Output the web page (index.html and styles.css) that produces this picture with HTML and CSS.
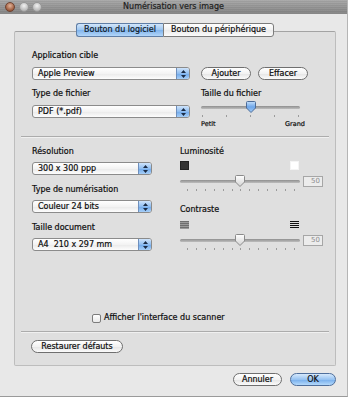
FILE: index.html
```html
<!DOCTYPE html>
<html lang="fr">
<head>
<meta charset="utf-8">
<title>Numérisation vers image</title>
<link rel="stylesheet" href="styles.css">
</head>
<body>
<div class="window">
  <div class="titlebar">
    <div class="lights"><span class="light close"></span><span class="light"></span><span class="light"></span></div>
    <div class="title">Numérisation vers image</div>
    <div></div>
  </div>
  <div class="content">
    <div class="box">
      <div class="tabs">
        <span class="tab tab-left active">Bouton du logiciel</span><span class="tab tab-right">Bouton du périphérique</span>
      </div>

      <div class="sec-top">
        <div class="lbl l-app">Application cible</div>
        <div class="row-app">
          <div class="popup w158"><span class="ptext">Apple Preview</span><span class="cap"><svg width="5" height="8" viewBox="0 0 5 8"><path d="M2.5 0 L5 3 H0 Z M0 5 H5 L2.5 8 Z" fill="#1b2c45"/></svg></span></div>
          <div class="btn w50">Ajouter</div>
          <div class="btn w50">Effacer</div>
        </div>
        <div class="row-type">
          <div class="col-type">
            <div class="lbl">Type de fichier</div>
            <div class="popup w158 mt6"><span class="ptext">PDF (*.pdf)</span><span class="cap"><svg width="5" height="8" viewBox="0 0 5 8"><path d="M2.5 0 L5 3 H0 Z M0 5 H5 L2.5 8 Z" fill="#1b2c45"/></svg></span></div>
          </div>
          <div class="col-size">
            <div class="lbl">Taille du fichier</div>
            <div class="slider s-top">
              <span class="track"></span>
              <svg class="thumb" style="left:50%" width="11" height="12" viewBox="0 0 11 12"><defs><linearGradient id="gb" x1="0" y1="0" x2="0" y2="1"><stop offset="0" stop-color="#c4dffb"/><stop offset="0.5" stop-color="#6fa7ea"/><stop offset="1" stop-color="#a2cbf6"/></linearGradient></defs><path d="M1 1.5 Q1 0.5 2 0.5 H9 Q10 0.5 10 1.5 V7 L5.5 11.5 L1 7 Z" fill="url(#gb)" stroke="#4d6c98"/></svg>
            </div>
            <div class="ticks t5"><i></i><i></i><i></i><i></i><i></i></div>
            <div class="minmax"><span>Petit</span><span>Grand</span></div>
          </div>
        </div>
      </div>

      <div class="sep"></div>

      <div class="sec-mid">
        <div class="col-left">
          <div class="lbl">Résolution</div>
          <div class="popup w120 mt5"><span class="ptext">300 x 300 ppp</span><span class="cap"><svg width="5" height="8" viewBox="0 0 5 8"><path d="M2.5 0 L5 3 H0 Z M0 5 H5 L2.5 8 Z" fill="#1b2c45"/></svg></span></div>
          <div class="lbl mt10">Type de numérisation</div>
          <div class="popup w120 mt5"><span class="ptext">Couleur 24 bits</span><span class="cap"><svg width="5" height="8" viewBox="0 0 5 8"><path d="M2.5 0 L5 3 H0 Z M0 5 H5 L2.5 8 Z" fill="#1b2c45"/></svg></span></div>
          <div class="lbl mt10">Taille document</div>
          <div class="popup w120 mt5"><span class="ptext">A4&nbsp; 210 x 297 mm</span><span class="cap"><svg width="5" height="8" viewBox="0 0 5 8"><path d="M2.5 0 L5 3 H0 Z M0 5 H5 L2.5 8 Z" fill="#1b2c45"/></svg></span></div>
        </div>
        <div class="col-right">
          <div class="lbl">Luminosité</div>
          <div class="icons mt4"><span class="sq-dark"></span><span class="sq-light"></span></div>
          <div class="slider-row mt5">
            <div class="slider s-bot">
              <span class="track"></span>
              <svg class="thumb" style="left:50%" width="11" height="12" viewBox="0 0 11 12"><defs><linearGradient id="gw" x1="0" y1="0" x2="0" y2="1"><stop offset="0" stop-color="#ffffff"/><stop offset="1" stop-color="#d2d2d2"/></linearGradient></defs><path d="M1 1.5 Q1 0.5 2 0.5 H9 Q10 0.5 10 1.5 V7 L5.5 11.5 L1 7 Z" fill="url(#gw)" stroke="#8a8a8a"/></svg>
            </div>
            <div class="field">50</div>
          </div>
          <div class="ticks t13"><i></i><i></i><i></i><i></i><i></i><i></i><i></i><i></i><i></i><i></i><i></i><i></i><i></i></div>
          <div class="lbl mt14">Contraste</div>
          <div class="icons mt6"><span class="ct-low"></span><span class="ct-high"></span></div>
          <div class="slider-row mt4">
            <div class="slider s-bot">
              <span class="track"></span>
              <svg class="thumb" style="left:50%" width="11" height="12" viewBox="0 0 11 12"><defs><linearGradient id="gw2" x1="0" y1="0" x2="0" y2="1"><stop offset="0" stop-color="#ffffff"/><stop offset="1" stop-color="#d2d2d2"/></linearGradient></defs><path d="M1 1.5 Q1 0.5 2 0.5 H9 Q10 0.5 10 1.5 V7 L5.5 11.5 L1 7 Z" fill="url(#gw2)" stroke="#8a8a8a"/></svg>
            </div>
            <div class="field">50</div>
          </div>
          <div class="ticks t13"><i></i><i></i><i></i><i></i><i></i><i></i><i></i><i></i><i></i><i></i><i></i><i></i><i></i></div>
        </div>
      </div>

      <div class="check-row"><span class="checkbox"></span><span>Afficher l'interface du scanner</span></div>

      <div class="sep sep2"></div>

      <div class="restore-row"><div class="btn w92">Restaurer défauts</div></div>
    </div>

    <div class="footer">
      <div class="btn w49">Annuler</div>
      <div class="btn btn-ok w46">OK</div>
    </div>
  </div>
</div>
</body>
</html>
```

FILE: styles.css
```css
* { box-sizing: border-box; }
html, body { margin: 0; padding: 0; }
body {
  background: #ffffff;
  font-family: "DejaVu Sans", sans-serif;
  font-size: 8px;
  color: #0d0d0d;
  -webkit-text-stroke: 0.2px currentColor;
  width: 350px;
  height: 400px;
  overflow: hidden;
}
.window {
  width: 348px;
  height: 397px;
  background: #e8e8e8;
  border-right: 1px solid #b5b5b5;
  border-bottom: 1px solid #9a9a9a;
}
.titlebar {
  height: 14px;
  display: grid;
  grid-template-columns: 1fr auto 1fr;
  align-items: center;
  background: repeating-linear-gradient(#c9c9c9 0 1px, #bdbdbd 1px 2px), linear-gradient(#d9d9d9, #adadad);
  background-blend-mode: multiply;
  border-bottom: 1px solid #878787;
  color: #1e1e1e;
}
.title { line-height: 13px; }
.lights { display: flex; gap: 3.5px; padding-left: 5px; }
.light {
  width: 10px; height: 10px; border-radius: 50%;
  background: radial-gradient(circle at 50% 35%, #f2f2f2, #b9b9b9 70%, #a8a8a8);
  border: 1px solid #979797;
}
.light.close {
  background: radial-gradient(circle at 50% 35%, #e3b49a, #9c5a3c 70%, #7d412a);
  border-color: #6e4332;
}
.content { padding: 0 13px 0 14px; }
.box {
  margin-top: 17px;
  width: 322px;
  height: 335px;
  background: #dfdfdf;
  border: 1px solid #bdbdbd;
  border-top-color: #a3a3a3;
  border-radius: 2px;
}
.tabs {
  margin-top: -9px;
  display: flex;
  justify-content: center;
  height: 14px;
}
.tab {
  height: 14px;
  line-height: 12px;
  text-align: center;
  border: 1px solid #7b7b7b;
  background: linear-gradient(#ffffff, #f1f1f1 50%, #e9e9e9 51%, #fbfbfb);
}
.tab-left {
  width: 87px;
  border-radius: 3px 0 0 3px;
  border-right: none;
}
.tab-right { width: 111px; border-radius: 0 3px 3px 0; }
.tab.active {
  background: linear-gradient(#d3e6fa, #9cc6f1 50%, #7fb3ec 51%, #b3d6f9);
  border-color: #5f7ea6;
  color: #0e1a2b;
}
.lbl { line-height: 10px; height: 10px; white-space: nowrap; }
.sec-top { padding-left: 17px; }
.l-app { margin-top: 14px; }
.row-app { display: flex; align-items: center; margin-top: 6px; gap: 7px; }
.row-app .popup { margin-right: 4px; }
.row-type { display: flex; margin-top: 9px; }
.col-type { width: 158px; }
.col-size { margin-left: 11px; width: 99px; }
.popup {
  height: 13px;
  display: flex;
  border: 1px solid #8b8b8b;
  border-radius: 3px;
  background: linear-gradient(#ffffff, #f3f3f3 50%, #e9e9e9 51%, #fdfdfd);
  overflow: hidden;
}
.ptext { flex: 1; padding-left: 5px; line-height: 11px; white-space: nowrap; }
.cap {
  width: 13px;
  display: flex;
  align-items: center;
  justify-content: center;
  border-left: 1px solid #6e8fbd;
  background: linear-gradient(#cfe4fb, #8fbdf0 50%, #6ea8ea 51%, #a7cff8);
}
.w158 { width: 158px; }
.w120 { width: 120px; }
.w50 { width: 50px; }
.w92 { width: 92px; }
.w49 { width: 49px; }
.w46 { width: 46px; }
.mt4 { margin-top: 4px; }
.mt5 { margin-top: 5px; }
.mt6 { margin-top: 6px; }
.mt10 { margin-top: 10px; }
.mt14 { margin-top: 14px; }
.btn {
  height: 13px;
  line-height: 11px;
  text-align: center;
  border: 1px solid #6f6f6f;
  border-radius: 7px;
  background: linear-gradient(#ffffff, #f2f2f2 50%, #e4e4e4 51%, #fbfbfb);
  white-space: nowrap;
}
.btn-ok {
  border-color: #4f6f9c;
  background: linear-gradient(#d6e9fc, #97c3f2 50%, #75adec 51%, #b4d9fb);
}
.slider { position: relative; height: 13px; }
.s-top { margin-top: 2px; width: 99px; }
.s-bot { width: 120px; }
.track {
  position: absolute;
  left: 0; right: 0; top: 5px;
  height: 3px;
  border-radius: 2px;
  background: linear-gradient(#8f8f8f, #bdbdbd);
}
.thumb { position: absolute; top: 0; transform: translateX(-50%); }
.ticks { display: flex; justify-content: space-between; height: 2px; }
.ticks i { display: block; width: 1px; height: 2px; background: #9b9b9b; }
.t5 { width: 99px; padding: 0 1px; margin-top: 1px; }
.t13 { width: 121px; padding: 0 6px 0 7px; margin-top: 2px; }
.minmax {
  display: flex;
  justify-content: space-between;
  font-size: 6.5px;
  line-height: 8px;
  margin-top: 3px;
  width: 104px;
}
.sep {
  margin: 8px 6px 0 6px;
  height: 2px;
  border-top: 1px solid #acacac;
  border-bottom: 1px solid #f0f0f0;
}
.sec-mid { display: flex; padding-left: 17px; margin-top: 9px; }
.col-left { width: 120px; }
.col-right { margin-left: 28px; width: 143px; }
.icons { display: flex; justify-content: space-between; width: 119px; height: 9px; }
.sq-dark { width: 9px; height: 9px; background: #333; border: 1px solid #222; }
.sq-light { width: 9px; height: 9px; background: #ffffff; border: 1px solid #f4f4f4; }
.ct-low {
  width: 9px; height: 8px;
  background: repeating-linear-gradient(#6e6e6e 0 1px, #9a9a9a 1px 2px);
}
.ct-high {
  width: 9px; height: 8px;
  background: repeating-linear-gradient(#111 0 1px, transparent 1px 2px);
}
.slider-row { display: flex; align-items: center; gap: 3px; height: 12px; }
.field {
  width: 20px;
  height: 11px;
  border: 1px solid #a6a6a6;
  background: #ececec;
  color: #8d8d8d;
  font-size: 7px;
  line-height: 9px;
  text-align: right;
  padding-right: 2px;
  -webkit-text-stroke: 0;
}
.check-row {
  display: flex;
  align-items: center;
  gap: 3px;
  margin: 62px 0 0 77px;
  height: 10px;
  line-height: 10px;
}
.checkbox {
  width: 9px; height: 9px;
  border: 1px solid #7c7c7c;
  border-radius: 2px;
  background: linear-gradient(#ffffff, #e9e9e9);
}
.sep2 { margin-top: 8px; }
.restore-row { padding-left: 16px; margin-top: 7px; }
.footer {
  display: flex;
  justify-content: flex-end;
  gap: 8px;
  margin-top: 7px;
  margin-right: -2px;
}
```
